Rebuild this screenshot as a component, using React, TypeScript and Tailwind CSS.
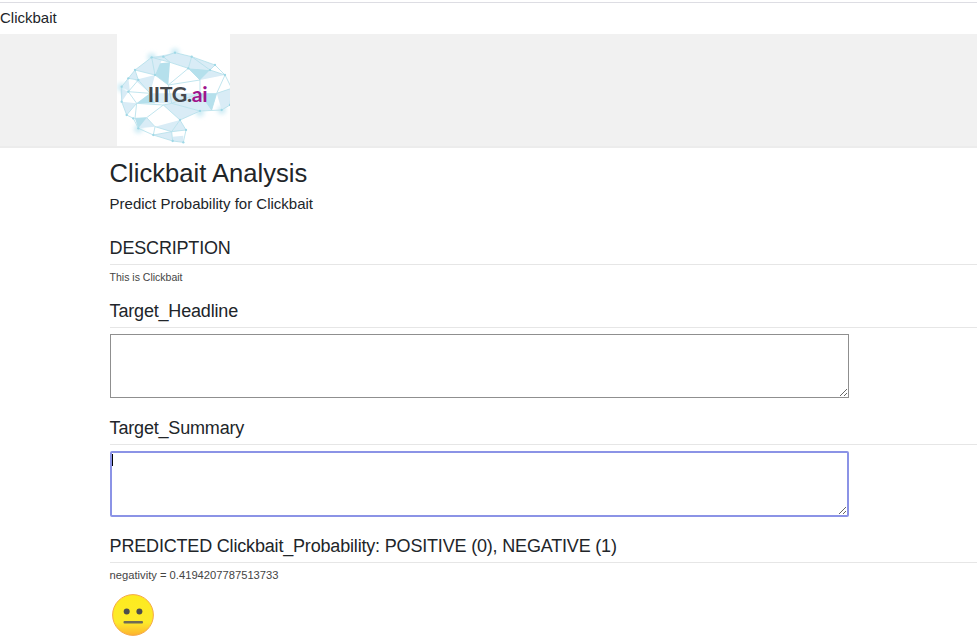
const Logo = () => {
  const light = [
    "105,135 155,97 190,95 165,150",
    "155,97 225,83 275,95 210,112",
    "225,83 275,95 265,130 210,112",
    "275,95 345,120 330,135 265,130",
    "265,130 330,135 375,150 300,165",
    "105,165 165,150 150,205",
    "85,160 115,165 105,135",
    "65,185 85,160 90,200",
    "110,235 150,205 350,205 335,255 300,258 215,235",
    "190,240 240,285 300,258 215,235",
    "65,230 110,235 80,270",
    "105,280 140,278 165,305 115,310",
    "165,305 240,285 215,320",
    "240,285 258,315 215,320",
    "160,330 215,320 218,348",
    "218,335 250,332 250,352 218,348",
    "60,190 65,230 85,200",
    "350,205 395,190 390,240 365,255",
  ];
  const dark = [
    "180,115 210,112 205,180 165,150",
    "265,130 330,135 300,165",
    "110,235 150,205 165,235",
    "300,205 350,205 335,255",
    "105,280 140,278 115,310",
  ];
  const lines = [
    "65,185 85,160 105,135 155,97 190,95 225,83 275,95 345,120 375,150 395,190 390,240 365,255 300,258 240,285 258,315 250,352 218,348 160,330 115,310 100,280 80,270 65,230 65,185",
    "85,160 115,165 105,135 165,150 155,97 210,112 190,95",
    "210,112 265,130 275,95 330,135 345,120",
    "330,135 375,150 350,205 395,190",
    "85,200 115,165 150,205 85,200 110,235 80,270",
    "165,150 205,180 265,130 300,165 205,180 215,235 300,205 300,165",
    "350,205 335,255 300,205",
    "110,235 105,280 140,278 190,240 240,285 215,320 165,305 140,278",
    "300,258 215,235 190,240 110,235",
    "165,305 160,330 215,320 258,315",
    "218,348 215,320",
  ];
  const dots = [
    [65, 185], [85, 160], [105, 135], [155, 97], [190, 95], [225, 83], [275, 95], [345, 120], [375, 150],
    [390, 240], [365, 255], [300, 258], [240, 285], [258, 315], [250, 352], [218, 348], [160, 330], [115, 310],
    [100, 280], [80, 270], [65, 230], [85, 200], [115, 165], [165, 150], [330, 135], [265, 130],
  ];
  return (
    <svg viewBox="51 27 339 336" className="block w-[113px] h-[112px] bg-white">
      <defs>
        <filter id="soft" x="-50%" y="-50%" width="200%" height="200%">
          <feGaussianBlur stdDeviation="7" />
        </filter>
        <filter id="raster">
          <feGaussianBlur stdDeviation="1" />
        </filter>
      </defs>
      {[[65, 187], [225, 83], [155, 97], [365, 255], [115, 312], [300, 262]].map(([x, y]) => (
        <circle key={`${x}-${y}`} cx={x} cy={y} r="13" fill="#cfecf5" filter="url(#soft)" />
      ))}
      <g filter="url(#raster)">
        {light.map((p) => <polygon key={p} points={p} fill="#d9ecf6" />)}
        {dark.map((p) => <polygon key={p} points={p} fill="#b5e0ec" />)}
        {lines.map((p) => <polyline key={p} points={p} fill="none" stroke="#b4e0ea" strokeWidth="2.5" />)}
        {dots.map(([x, y]) => <circle key={`${x}:${y}`} cx={x} cy={y} r="3.5" fill="#9fd8e6" />)}
      </g>
      <text x="143" y="232" fontSize="64" fontWeight="bold" fontFamily="Lato, sans-serif" fill="#45484d" textLength="180">
        IITG.<tspan fill="#a0148c">ai</tspan>
      </text>
    </svg>
  );
};

const NeutralFace = () => (
  <svg viewBox="0 0 44 44" className="block w-[44px] h-[44px]">
    <defs>
      <linearGradient id="face" x1="0" y1="0" x2="0" y2="1">
        <stop offset="0" stopColor="#fdeb1e" />
        <stop offset="0.68" stopColor="#fdea2a" />
        <stop offset="1" stopColor="#fdb22f" />
      </linearGradient>
    </defs>
    <circle cx="22" cy="22" r="20.4" fill="url(#face)" stroke="#f6a94a" strokeWidth="1" />
    <circle cx="15.7" cy="18.6" r="3" fill="#4d4d4d" />
    <circle cx="28.4" cy="18.6" r="3" fill="#4d4d4d" />
    <rect x="12.5" y="28" width="19.5" height="2.6" rx="1" fill="#6f6b55" />
  </svg>
);

const SectionTitle = ({ children }: { children: React.ReactNode }) => (
  <h3 className="text-[18px] leading-[22px] pb-[5px] border-b border-[#e6e6e6] tracking-[-0.01em]">{children}</h3>
);

export default function App() {
  return (
    <div className="h-[640px] overflow-hidden bg-white text-[#212529] font-['Liberation_Sans',Arial,sans-serif]">
      <div className="mt-[2px] border-t border-[#dddde3] h-[32px] text-[15px] leading-[30px]">Clickbait</div>
      <div className="h-[114px] bg-[#f1f1f1] border-b-2 border-[#ececec] pl-[117px]">
        <Logo />
      </div>
      <main className="pl-[109.6px]">
        <h1 className="mt-[10px] text-[25.6px] leading-[31px]">Clickbait Analysis</h1>
        <p className="mt-[6px] text-[15px] leading-[18px]">Predict Probability for Clickbait</p>
        <div className="mt-[24px]">
          <SectionTitle>DESCRIPTION</SectionTitle>
        </div>
        <p className="mt-[6px] text-[10.5px] leading-[13px] text-[#444]">This is Clickbait</p>
        <div className="mt-[16px]">
          <SectionTitle>Target_Headline</SectionTitle>
        </div>
        <textarea className="block mt-[6px] ml-[0.4px] w-[739px] h-[64px] border border-[#8f8f8f] outline-none" />
        <div className="mt-[19px]">
          <SectionTitle>Target_Summary</SectionTitle>
        </div>
        <div className="relative mt-[6px] ml-[0.4px] w-[739px]">
          <textarea className="block w-[739px] h-[66px] border-2 border-[#8b93e6] rounded-[2px] outline-none" />
          <span className="absolute left-[2px] top-[3px] w-[1px] h-[12px] bg-black" />
        </div>
        <div className="mt-[18px]">
          <SectionTitle>PREDICTED Clickbait_Probability: POSITIVE (0), NEGATIVE (1)</SectionTitle>
        </div>
        <p className="mt-[5px] text-[11.2px] leading-[14px] text-[#444]">negativity = 0.4194207787513733</p>
        <div className="mt-[11px] ml-[1px]">
          <NeutralFace />
        </div>
      </main>
    </div>
  );
}
